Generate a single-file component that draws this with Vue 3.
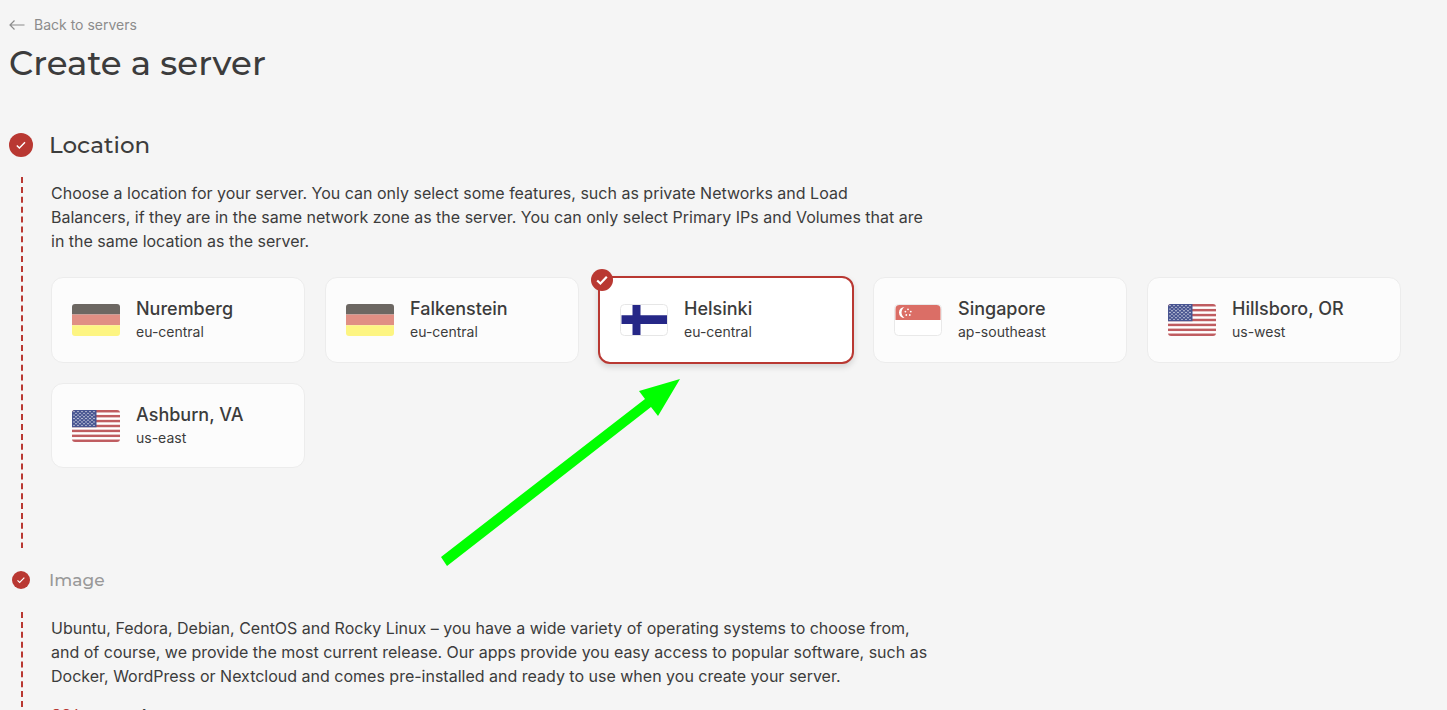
<script setup>
const locations = [
  { name: 'Nuremberg', zone: 'eu-central', flag: 'de' },
  { name: 'Falkenstein', zone: 'eu-central', flag: 'de' },
  { name: 'Helsinki', zone: 'eu-central', flag: 'fi' },
  { name: 'Singapore', zone: 'ap-southeast', flag: 'sg' },
  { name: 'Hillsboro, OR', zone: 'us-west', flag: 'us' },
  { name: 'Ashburn, VA', zone: 'us-east', flag: 'us' },
]
const selected = 'Helsinki'
const stars = []
for (let r = 0; r < 9; r++) {
  for (let c = 0; c < (r % 2 ? 5 : 6); c++) {
    stars.push({ x: 2 + c * 4 + (r % 2 ? 2 : 0), y: 1.6 + r * 1.72 })
  }
}
</script>

<template>
  <main class="page">
    <a class="back" href="#">
      <svg width="16" height="16" viewBox="0 0 16 16" fill="none" stroke="#8c8c8c" stroke-width="1.2">
        <path d="M15.500 8H1M5.500 3.500L1 8l4.500 4.500" />
      </svg>
      <span>Back to servers</span>
    </a>
    <h1>Create a server</h1>

    <section class="step location">
      <header>
        <span class="badge big">
          <svg width="12" height="12" viewBox="0 0 12 12"><path d="M1.800 6.500l2.600 2.500L10 3.200" /></svg>
        </span>
        <h2>Location</h2>
      </header>
      <div class="body">
        <svg class="rail" width="2"><line x1="1" y1="0" x2="1" y2="100%" /></svg>
        <div class="content">
          <p>Choose a location for your server. You can only select some features, such as private Networks and Load Balancers, if they are in the same network zone as the server. You can only select Primary IPs and Volumes that are in the same location as the server.</p>
          <div class="cards">
            <button
              v-for="l in locations"
              :key="l.name"
              type="button"
              class="card"
              :class="{ active: l.name === selected }"
              :aria-pressed="l.name === selected"
            >
              <span v-if="l.name === selected" class="tick">
                <svg width="14" height="14" viewBox="0 0 14 14"><path d="M2.200 7.500l3.200 3L11.800 3.800" /></svg>
              </span>
              <svg v-if="l.flag === 'de'" class="flag" viewBox="0 0 48 32">
                <path fill="#6c6762" d="M0 0h48v10.500H0z" />
                <path fill="#e08f84" d="M0 10.500h48V21.300H0z" />
                <path fill="#fdf582" d="M0 21.300h48V32H0z" />
              </svg>
              <svg v-else-if="l.flag === 'fi'" class="flag" viewBox="0 0 48 32">
                <rect x=".5" y=".5" width="47" height="31" rx="4" fill="#fff" stroke="#e6e6e6" />
                <path fill="#252787" d="M12.500 1h8v30h-8zM1.500 11.300h45.500v8.700H1.500z" />
              </svg>
              <svg v-else-if="l.flag === 'sg'" class="flag" viewBox="0 0 48 32">
                <rect x=".5" y=".5" width="47" height="31" rx="4" fill="#fff" stroke="#e9e9e9" />
                <path fill="#db6e66" d="M1.500 16V5q0-4 4-4h37q4 0 4 4v11z" />
                <path fill="#fff" d="M10.500 3a5.500 5.500 0 1 0 0 11a6.600 6.600 0 0 1 0-11z" />
                <g fill="#fff">
                  <circle cx="14" cy="5.300" r=".9" /><circle cx="11.400" cy="7.600" r=".9" />
                  <circle cx="16.800" cy="7.600" r=".9" /><circle cx="12.300" cy="11" r=".9" />
                  <circle cx="15.800" cy="11" r=".9" />
                </g>
              </svg>
              <svg v-else class="flag" viewBox="0 0 48 32">
                <path fill="#fff" d="M0 0h48v32H0z" />
                <rect v-for="n in 7" :key="n" x="0" :y="(n - 1) * 4.92" width="48" height="2.46" fill="#bf5c60" />
                <path fill="#485591" d="M0 0h24.500v17.200H0z" />
                <circle v-for="(s, i) in stars" :key="i" :cx="s.x" :cy="s.y" r=".65" fill="#fff" />
              </svg>
              <span class="label">
                <span class="name">{{ l.name }}</span>
                <span class="zone">{{ l.zone }}</span>
              </span>
            </button>
          </div>
        </div>
        <svg class="pointer" width="240" height="190" viewBox="0 0 240 190">
          <path fill="#0f0" d="M239 1L198 13l6 8L0 179l6 9L210 29l7 9z" />
        </svg>
      </div>
    </section>

    <section class="step image">
      <header>
        <span class="badge">
          <svg width="10" height="10" viewBox="0 0 12 12"><path d="M1.800 6.500l2.600 2.500L10 3.200" /></svg>
        </span>
        <h3>Image</h3>
      </header>
      <div class="body">
        <svg class="rail" width="2"><line x1="1" y1="0" x2="1" y2="100%" /></svg>
        <div class="content">
          <p>Ubuntu, Fedora, Debian, CentOS and Rocky Linux – you have a wide variety of operating systems to choose from, and of course, we provide the most current release. Our apps provide you easy access to popular software, such as Docker, WordPress or Nextcloud and comes pre-installed and ready to use when you create your server.</p>
          <nav class="tabs">
            <button type="button" class="on">OS Images</button>
            <button type="button">Apps</button>
          </nav>
        </div>
      </div>
    </section>
  </main>
</template>

<style>
html, body { background: #f5f5f5; }
body { overflow: hidden; }
</style>

<style scoped>
* { box-sizing: border-box; }
.page {
  height: 100vh;
  overflow: hidden;
  padding: 16px 46px 0 9px;
  background: #f5f5f5;
  color: #3c3c3c;
  font: 400 16px/24px Inter, "Liberation Sans", sans-serif;
}
.back {
  display: flex;
  align-items: center;
  gap: 9px;
  width: max-content;
  height: 18px;
  color: #8c8c8c;
  font-size: 14px;
  text-decoration: none;
}
h1, h2, h3 { margin: 0; font-family: Montserrat, Lato, sans-serif; font-weight: 500; }
h1 { margin-top: 7px; font-size: 34px; line-height: 44px; }
header { display: flex; align-items: center; height: 32px; gap: 16px; }
h2 { font-size: 23px; line-height: 32px; }
h3 { font-size: 17px; line-height: 32px; color: #999; }
.location { margin-top: 44px; }
.image { margin-top: 16px; }
.badge {
  display: flex;
  align-items: center;
  justify-content: center;
  width: 18px;
  height: 18px;
  margin: 0 3px;
  border-radius: 50%;
  background: #b93832;
}
.badge.big { width: 24px; height: 24px; margin: 0; }
.badge path, .tick path { fill: none; stroke: #fff; stroke-width: 1.4; }
.tick path { stroke-width: 2.2; }
.body { position: relative; display: flex; gap: 28px; padding-left: 12px; margin-top: 16px; }
.rail { flex: none; height: auto; }
.rail line { stroke: #b93832; stroke-width: 2; stroke-dasharray: 6 3.880; }
.content { flex: 1; min-width: 0; padding-top: 4px; }
.location .content { padding-bottom: 80px; }
p { margin: 0; max-width: 878px; }
.cards {
  display: grid;
  grid-template-columns: repeat(auto-fill, minmax(250px, 1fr));
  gap: 20px;
  margin-top: 24px;
}
.card {
  position: relative;
  display: flex;
  align-items: center;
  gap: 16px;
  min-height: 85px;
  padding: 0 20px;
  border: 1px solid #ececec;
  border-radius: 12px;
  background: #fcfcfc;
  color: inherit;
  font: inherit;
  text-align: left;
}
.card.active {
  min-height: 88px;
  margin: -1px;
  border: 2px solid #b93832;
  background: #fff;
  box-shadow: 0 3px 6px rgba(0, 0, 0, 0.14);
}
.tick {
  position: absolute;
  top: -9px;
  left: -9px;
  display: flex;
  align-items: center;
  justify-content: center;
  width: 22px;
  height: 22px;
  border-radius: 50%;
  background: #b93832;
}
.flag { flex: none; width: 48px; height: 32px; border-radius: 3px; }
.label { display: flex; flex-direction: column; padding-bottom: 2px; }
.name { font-size: 18px; line-height: 26px; font-weight: 500; }
.zone { font-size: 14px; line-height: 20px; }
.pointer { position: absolute; left: 432px; top: 201px; }
.tabs { display: flex; gap: 16px; margin-top: 17px; }
.tabs button { padding: 0; border: 0; background: none; color: #3c3c3c; font: 500 14px/20px Inter, sans-serif; }
.tabs .on { color: #b93832; }
</style>
